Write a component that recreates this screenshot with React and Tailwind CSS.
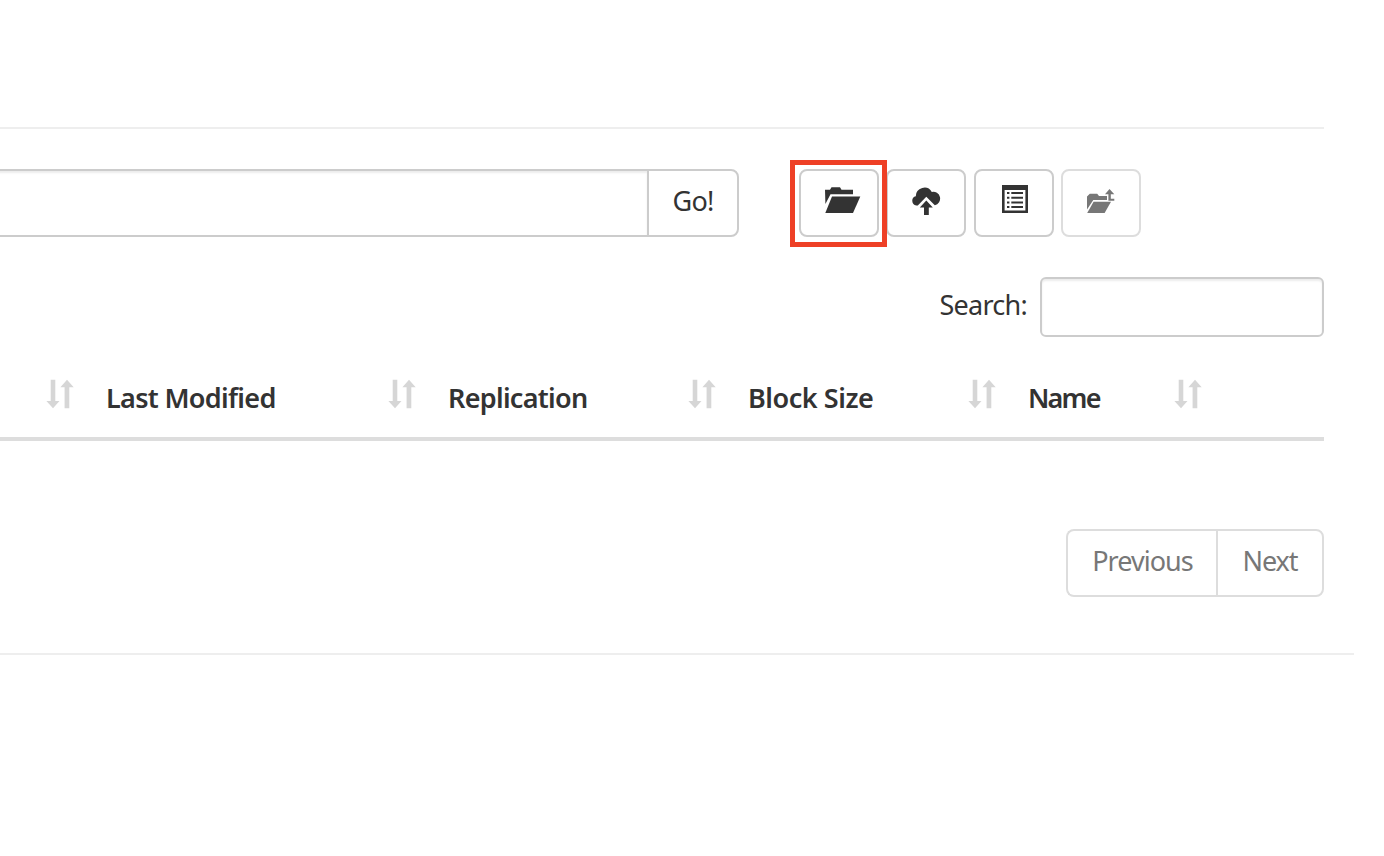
import React from 'react';

function FolderOpenIcon() {
  return (
    <svg className="block h-7 w-9" viewBox="0 0 36 28" fill="#333">
      <path d="M0 4.8H5L6.5 2.3H15L16.5 4.8H28V9.3H5.5L0.4 19Z" />
      <path d="M7 11.5H35.3L28 28H0.3Z" />
    </svg>
  );
}

function CloudUploadIcon() {
  return (
    <svg className="block h-7 w-[30px]" viewBox="0 0 30 28" fill="#333">
      <path d="M4.3 18.4A4.7 4.7 0 0 1 3.8 9.2A8.6 8.6 0 0 1 19.8 4.9A6.8 6.8 0 1 1 22.8 18.2L14.3 9.8L5.8 18.4Z" />
      <path d="M14.3 13.6L20.8 20.6H16.8V28H12V20.6H7.8Z" />
    </svg>
  );
}

function ListIcon() {
  return (
    <svg className="block h-7 w-[26px]" viewBox="0 0 26 28" fill="#333">
      <path fillRule="evenodd" d="M0 0H26V28H0ZM2.6 5V25.5H23.4V5Z" />
      <path d="M5 7H7.4V9H5ZM9.3 7H21V9H9.3ZM5 11.7H7.4V13.7H5ZM9.3 11.7H21V13.7H9.3ZM5 16.4H7.4V18.4H5ZM9.3 16.4H21V18.4H9.3ZM5 21H7.4V23H5ZM9.3 21H21V23H9.3Z" />
    </svg>
  );
}

function FolderUpIcon() {
  return (
    <svg className="block h-6 w-7" viewBox="0 0 28 24" fill="#777">
      <path d="M0 7.4L2.8 4.8H10.2L12 7H20V11H6.3L0 20.6Z" />
      <path d="M6.6 12.8H24L17.6 24H0.2Z" />
      <path d="M22.5 0L27.3 5.3H23.8V9.8H27.3V11.8H21.4V5.3H18Z" />
    </svg>
  );
}

function SortIcon() {
  return (
    <svg className="block h-[30px] w-7 shrink-0" viewBox="0 0 28 30" fill="#d6d6d6">
      <path d="M4.7 0.8H9.3V22H13.5L7 29.3L0.4 22H4.7Z" />
      <path d="M18.6 29.3H23.3V8.2H27.7L21 0.8L14.4 8.2H18.6Z" />
    </svg>
  );
}

export default function App() {
  const button = 'h-[68px] w-20 shrink-0 rounded-lg border-2 bg-white';
  return (
    <main className="flex h-[856px] w-[1384px] flex-col overflow-hidden bg-white font-['Noto_Sans',sans-serif] text-[27px] text-[#333]">
      <hr className="mt-[127px] w-[1324px] border-t-2 border-[#eee]" />

      <section className="mt-10 flex h-[68px]">
        <input
          aria-label="Directory"
          className="-ml-3 w-[659px] border-y-2 border-[#ccc] shadow-[inset_0_2px_2px_rgba(0,0,0,0.075)] outline-none"
        />
        <button className="w-[92px] rounded-r-lg border-2 border-[#ccc] pb-[5px] leading-[59px] tracking-[-0.8px]">Go!</button>
        <div className="ml-[51px] -mt-[9px] flex h-[87px] w-[97px] shrink-0 border-[5px] border-[#ee4026] pl-1 pt-1">
          <button aria-label="Create directory" className={`${button} border-[#ccc] pb-[22px] pl-6 pt-[13px]`}>
            <FolderOpenIcon />
          </button>
        </div>
        <button aria-label="Upload" className="-ml-px h-[68px] w-20 shrink-0 rounded-lg border-2 border-[#ccc] pb-5 pl-6 pt-4 [clip-path:inset(0_0_0_1px)]">
          <CloudUploadIcon />
        </button>
        <button aria-label="List" className={`${button} ml-2 border-[#ccc] pb-[22px] pl-[26px] pt-[14px]`}>
          <ListIcon />
        </button>
        <button aria-label="Move up" disabled className={`${button} ml-[7px] border-[#ddd] pb-[22px] pl-6 pt-[18px]`}>
          <FolderUpIcon />
        </button>
      </section>

      <label className="mt-10 flex h-[60px] w-[1324px] justify-end">
        <span className="mr-[13px] leading-[55px] tracking-[-0.75px]">Search:</span>
        <input className="w-[284px] rounded-md border-2 border-[#ccc] shadow-[inset_0_2px_2px_rgba(0,0,0,0.075)] outline-none" />
      </label>

      <div className="mt-[42px] grid h-[62px] w-[1324px] grid-cols-[46px_342px_300px_280px_206px_150px] border-b-4 border-[#ddd] font-semibold leading-[38px] whitespace-nowrap">
        <span />
        <div className="flex">
          <SortIcon />
          <span className="ml-8 tracking-[-0.68px]">Last Modified</span>
        </div>
        <div className="flex">
          <SortIcon />
          <span className="ml-8 tracking-[-0.7px]">Replication</span>
        </div>
        <div className="flex">
          <SortIcon />
          <span className="ml-8 tracking-[-0.45px]">Block Size</span>
        </div>
        <div className="flex">
          <SortIcon />
          <span className="ml-8 tracking-[-1.8px]">Name</span>
        </div>
        <div className="flex">
          <SortIcon />
        </div>
      </div>

      <nav className="mt-[88px] flex h-[68px] w-[1324px] justify-end text-[#777]">
        <button className="w-[151px] rounded-l-lg border-y-2 border-l-2 border-[#ddd] pb-[5px] leading-[59px] tracking-[-0.95px]">Previous</button>
        <button className="-ml-px w-[108px] rounded-r-lg border-2 border-[#ddd] pb-[5px] leading-[59px] tracking-[-1px]">Next</button>
      </nav>

      <hr className="mt-14 w-[1354px] border-t-2 border-[#eee]" />
    </main>
  );
}
